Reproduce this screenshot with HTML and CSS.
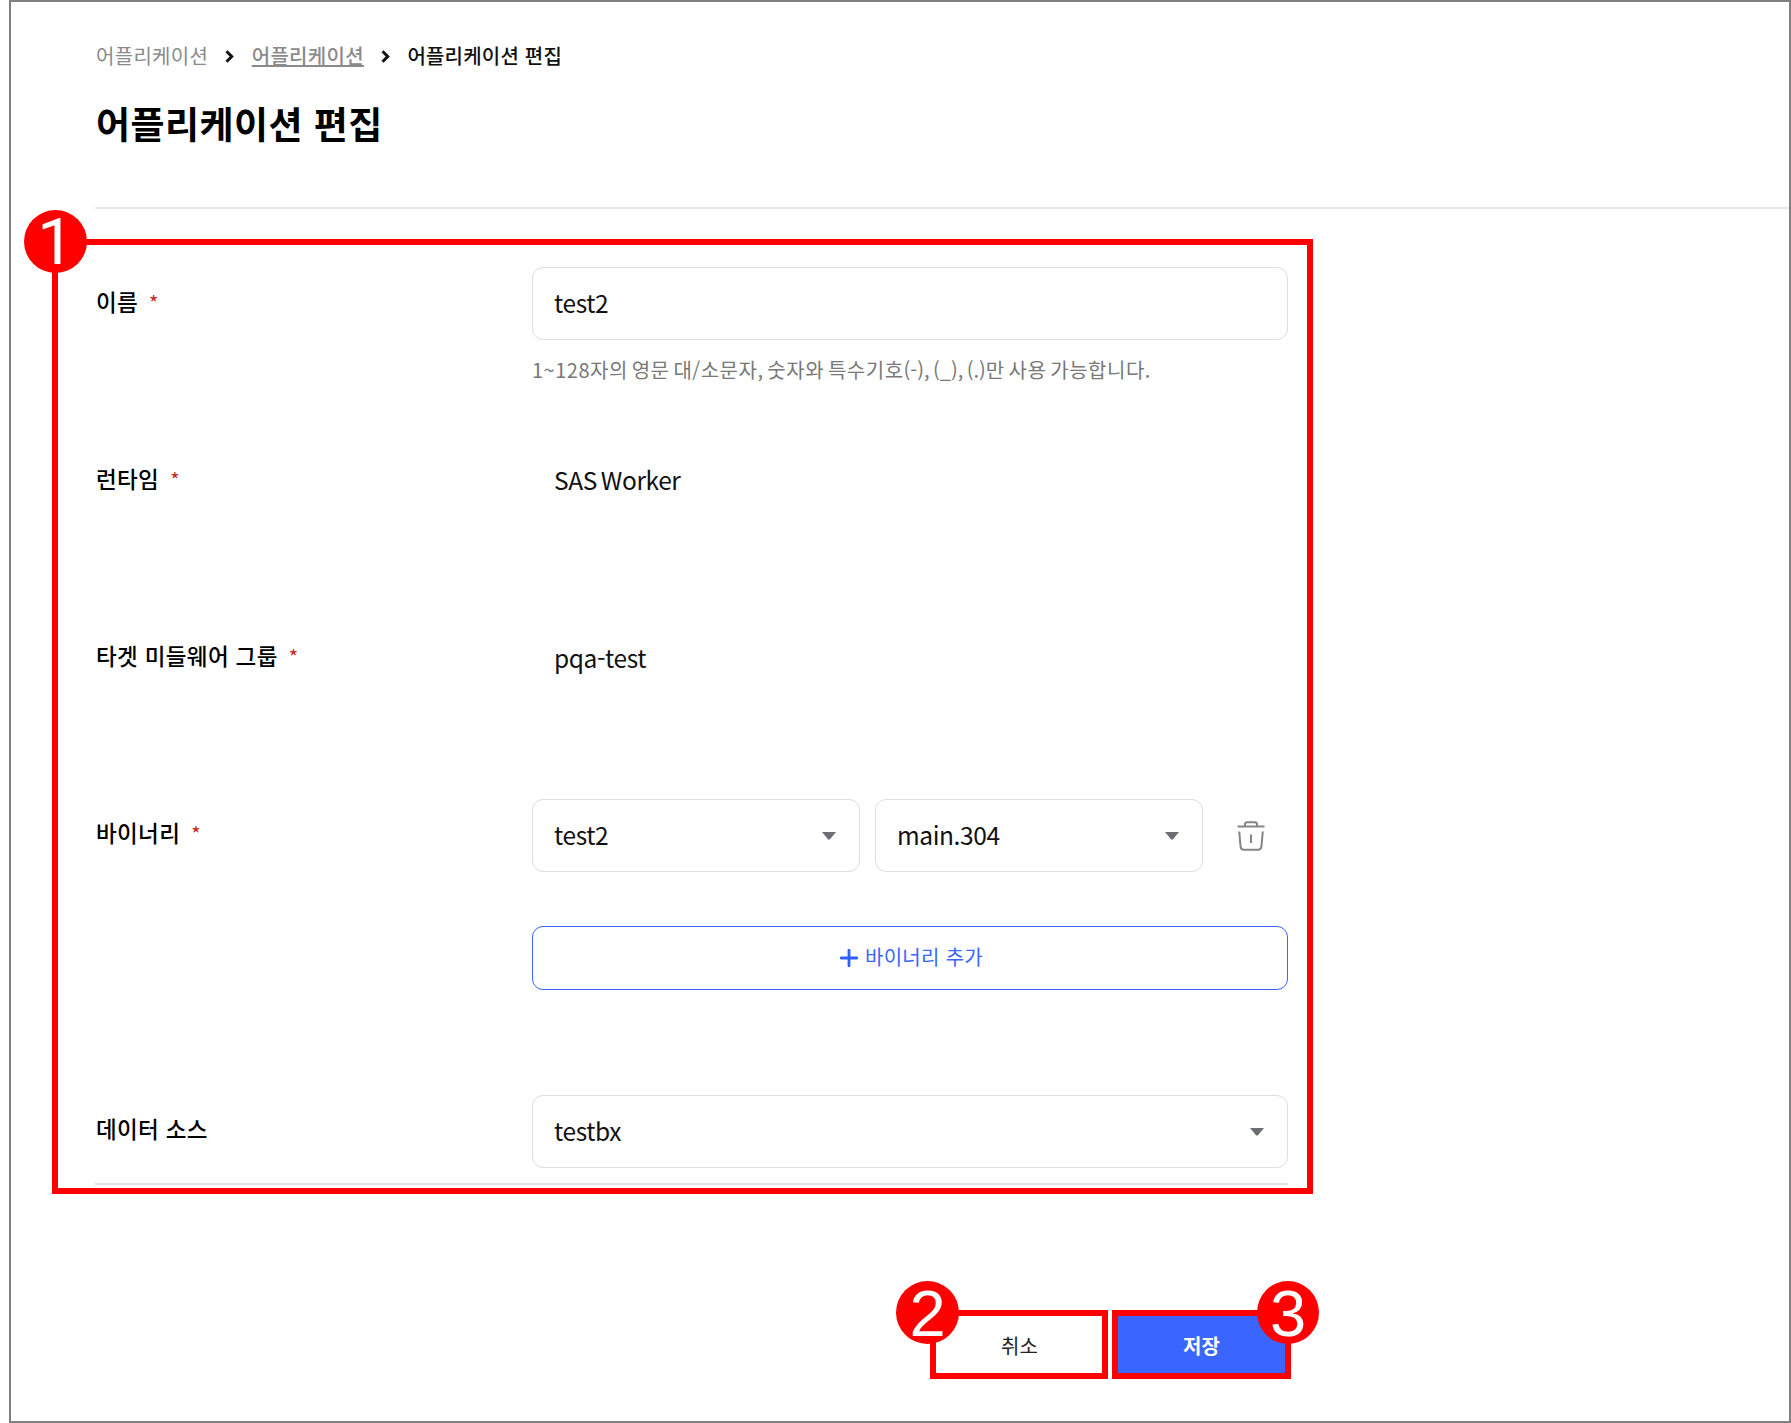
FILE: index.html
```html
<!DOCTYPE html>
<html lang="ko">
<head>
<meta charset="utf-8">
<title>어플리케이션 편집</title>
<link rel="stylesheet" href="styles.css">
</head>
<body>
<main class="page">
  <header class="head">
    <nav class="crumbs">
      <span class="crumb">어플리케이션</span>
      <svg class="chev" viewBox="0 0 11 15"><path d="M2.500 2.300l5.200 5.200-5.200 5.200"/></svg>
      <a class="crumb link">어플리케이션</a>
      <svg class="chev" viewBox="0 0 11 15"><path d="M2.500 2.300l5.200 5.200-5.200 5.200"/></svg>
      <span class="crumb current">어플리케이션 편집</span>
    </nav>
    <h1 class="title">어플리케이션 편집</h1>
  </header>

  <form class="form">
    <div class="row">
      <label class="label">이름<span class="req">*</span></label>
      <div class="field">
        <div class="box">test2</div>
        <p class="help">1~128자의 영문 대/소문자, 숫자와 특수기호<span class="marks">(-), (_), (.)</span>만 사용 가능합니다.</p>
      </div>
    </div>
    <div class="row">
      <label class="label">런타임<span class="req">*</span></label>
      <div class="field"><div class="box plain">SAS Worker</div></div>
    </div>
    <div class="row">
      <label class="label">타겟 미들웨어 그룹<span class="req">*</span></label>
      <div class="field"><div class="box plain">pqa-test</div></div>
    </div>
    <div class="row tall">
      <label class="label">바이너리<span class="req">*</span></label>
      <div class="field">
        <div class="binary">
          <div class="box select">test2<svg class="caret" viewBox="0 0 14 8"><path d="M0 0h14L7.8 7.6h-1.6z"/></svg></div>
          <div class="box select">main.304<svg class="caret" viewBox="0 0 14 8"><path d="M0 0h14L7.8 7.6h-1.6z"/></svg></div>
          <svg class="trash" viewBox="0 0 28 30"><path d="M.5 5.5h27M8 5.2V3.4Q8 1.2 10.2 1.2h7.6Q20 1.2 20 3.4v1.8M2.2 10.5l1.4 15.2Q3.9 28.8 7 28.8h14q3.100 0 3.400-3.100l1.400-15.200M14 13.500v8.500"/></svg>
        </div>
        <div class="add"><svg class="plus" viewBox="0 0 18 18"><path d="M9 1.200v15.600M1.200 9h15.600"/></svg><span class="add-text">바이너리 추가</span></div>
      </div>
    </div>
    <div class="row last">
      <label class="label">데이터 소스</label>
      <div class="field"><div class="box select">testbx<svg class="caret" viewBox="0 0 14 8"><path d="M0 0h14L7.8 7.6h-1.6z"/></svg></div></div>
    </div>
  </form>

  <footer class="actions">
    <div class="btn cancel">취소</div>
    <div class="btn save">저장</div>
  </footer>

  <div class="mark mark-form"></div>
  <div class="mark mark-cancel"></div>
  <div class="mark mark-save"></div>
  <div class="badge badge-1">1</div>
  <div class="badge badge-2">2</div>
  <div class="badge badge-3">3</div>
</main>
</body>
</html>
```
FILE: styles.css
```css
* { box-sizing: border-box; }

body {
  margin: 0;
  background: #fff;
  color: #000;
  font-family: "Noto Sans CJK KR", sans-serif;
}

.page {
  position: relative;
  width: 1782px;
  height: 1423px;
  margin-left: 9px;
  padding-left: 84px;
  border: 2px solid #808080;
}

.head {
  height: 207px;
  padding-top: 39px;
  border-bottom: 2px solid #e6e9ed;
}

.crumbs {
  display: flex;
  align-items: center;
  height: 30px;
  padding-left: 1px;
}

.crumb {
  color: #8a8a8a;
  font-size: 20px;
  font-weight: 400;
  line-height: 30px;
  letter-spacing: 0.300px;
}

.crumb.link {
  font-weight: 500;
  text-decoration: underline;
  text-decoration-thickness: 1.500px;
  text-underline-offset: 1px;
}

.crumb.current {
  color: #111;
  font-weight: 500;
  letter-spacing: 0.200px;
}

.chev {
  width: 11px;
  height: 15px;
  margin: 0 16.500px 0 16px;
  fill: none;
  stroke: #111;
  stroke-width: 3;
}

.title {
  margin: 24px 0 0 1px;
  font-size: 37px;
  font-weight: 700;
  line-height: 56px;
  letter-spacing: 0.450px;
}

.form {
  width: 1193px;
  margin-top: 58px;
  height: 918px;
  border-bottom: 2px solid #dfe3e8;
}

.row {
  display: grid;
  grid-template-columns: 437px 756px;
  height: 177.330px;
}

.row.tall { height: 296px; }
.row.last { height: 73px; }

.label {
  padding: 15.500px 0 0 1px;
  font-size: 22.500px;
  font-weight: 500;
  line-height: 36px;
  letter-spacing: 0.350px;
}

.req {
  margin-left: 11px;
  color: #c81e1e;
  font-size: 20px;
  font-weight: 400;
}

.box {
  display: flex;
  align-items: center;
  height: 73px;
  padding: 0 22px 2px 21px;
  border: 1.500px solid #dedede;
  border-radius: 11px;
  color: #111;
  font-size: 24.500px;
  letter-spacing: -0.400px;
  word-spacing: -2.500px;
}

.box.plain { border-color: transparent; }
.box.select { justify-content: space-between; padding-right: 23px; }

.caret {
  width: 14px;
  height: 8px;
  margin-top: 3px;
  fill: #6b6f74;
}

.help {
  margin: 15px 0 0;
  color: #787878;
  font-size: 20px;
  line-height: 30px;
  letter-spacing: 0.500px;
  word-spacing: -2.200px;
}

.marks { letter-spacing: 0; }

.binary {
  display: grid;
  grid-template-columns: 328px 328px 28px;
  column-gap: 15px;
  align-items: center;
}

.trash {
  width: 28px;
  height: 30px;
  margin: 1px 0 0 19px;
  fill: none;
  stroke: #858585;
  stroke-width: 2;
}

.add {
  display: flex;
  align-items: center;
  justify-content: center;
  gap: 7px;
  height: 64px;
  margin-top: 54px;
  padding-left: 3px;
  border: 1.500px solid #3a66ff;
  border-radius: 11px;
  color: #3a66ff;
  font-size: 20px;
  letter-spacing: 0.300px;
}

.add-text { padding-bottom: 2px; }

.plus {
  width: 18px;
  height: 18px;
  fill: none;
  stroke: #2f5fff;
  stroke-width: 2.800;
  stroke-linecap: round;
}

.actions {
  display: flex;
  gap: 10px;
  margin: 129px 0 0 839px;
}

.btn {
  width: 172px;
  height: 61px;
  padding-right: 1px;
  border-radius: 6px;
  font-size: 20px;
  line-height: 63px;
  text-align: center;
}

.btn.cancel { color: #222; }
.btn.save { background: #3a66ff; color: #fff; font-weight: 700; }

/* Numbered callouts laid over the form */
.mark {
  position: absolute;
  border: 6px solid #f00;
}

.mark-form { left: 41px; top: 237px; width: 1261px; height: 955px; }
.mark-cancel { left: 919px; top: 1308px; width: 178px; height: 69px; }
.mark-save { left: 1101px; top: 1308px; width: 179px; height: 69px; }

.badge {
  position: absolute;
  width: 63px;
  height: 63px;
  border-radius: 50%;
  background: #f00;
  color: #fff;
  font: 65px/65px "Liberation Sans", Arial, sans-serif;
  text-align: center;
}

.badge-1 {
  left: 13px;
  top: 208px;
  font-family: Roboto, Arial, sans-serif;
}
.badge-2 { left: 885px; top: 1279px; }
.badge-3 { left: 1246px; top: 1279px; width: 62px; }
```
